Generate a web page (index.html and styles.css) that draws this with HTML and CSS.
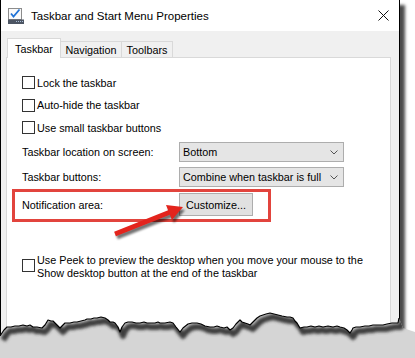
FILE: index.html
```html
<!DOCTYPE html>
<html lang="en">
<head>
  <meta charset="UTF-8">
  <title>Taskbar and Start Menu Properties</title>
  <link rel="stylesheet" href="styles.css">
</head>
<body>
  <div class="window">
    <div class="titlebar">
      <svg class="app-icon" width="16" height="17" viewBox="0 0 16 17">
        <rect x="0.5" y="1.5" width="13" height="11" fill="#fafafa" stroke="#8c8c8c"/>
        <polyline points="3,6.5 5.5,9.5 11.5,2.5" fill="none" stroke="#1f72d6" stroke-width="1.8"/>
        <rect x="0" y="12.5" width="16" height="4.5" fill="#4d5563"/>
        <rect x="8" y="14" width="1" height="1" fill="#a9bcd6"/>
        <rect x="10" y="14" width="1" height="1" fill="#a9bcd6"/>
        <rect x="12" y="14" width="1" height="1" fill="#a9bcd6"/>
        <rect x="14" y="14" width="1" height="1" fill="#a9bcd6"/>
      </svg>
      <span class="title">Taskbar and Start Menu Properties</span>
      <svg class="close" width="11" height="11" viewBox="0 0 11 11">
        <path d="M0.5 0.5 L10.5 10.5 M10.5 0.5 L0.5 10.5" stroke="#111" stroke-width="1"/>
      </svg>
    </div>

    <div class="tabs">
      <div class="tab active">Taskbar</div>
      <div class="tab nav">Navigation</div>
      <div class="tab tools">Toolbars</div>
    </div>

    <div class="panel">
      <div class="checks">
        <label class="check"><span class="box"></span>Lock the taskbar</label>
        <label class="check"><span class="box"></span>Auto-hide the taskbar</label>
        <label class="check"><span class="box"></span>Use small taskbar buttons</label>
      </div>

      <div class="fields">
        <div class="field">
          <span class="field-label">Taskbar location on screen:</span>
          <div class="select">Bottom
            <svg class="chevron" width="8" height="5" viewBox="0 0 8 5"><polyline points="0.5,0.5 4,4 7.5,0.5" fill="none" stroke="#555"/></svg>
          </div>
        </div>
        <div class="field">
          <span class="field-label">Taskbar buttons:</span>
          <div class="select">Combine when taskbar is full
            <svg class="chevron" width="8" height="5" viewBox="0 0 8 5"><polyline points="0.5,0.5 4,4 7.5,0.5" fill="none" stroke="#555"/></svg>
          </div>
        </div>
        <div class="field notify">
          <span class="field-label">Notification area:</span>
          <button class="btn">Customize...</button>
        </div>
      </div>

      <label class="check peek"><span class="box"></span><span>Use Peek to preview the desktop when you move your mouse to the<br>Show desktop button at the end of the taskbar</span></label>
    </div>
  </div>

  <div class="highlight"></div>

  <svg class="arrow" width="95" height="50" viewBox="105 195 95 50">
    <defs>
      <filter id="arrowBlur" x="-20%" y="-20%" width="140%" height="140%"><feGaussianBlur stdDeviation="1.2"/></filter>
    </defs>
    <polygon transform="translate(2,3)" filter="url(#arrowBlur)" fill="rgba(0,0,0,0.55)"
      points="114.1,231.7 168.1,210.2 166,205.1 183,207 171.9,219.9 169.9,214.8 115.9,236.3"/>
    <polygon fill="#e3241d"
      points="114.1,231.7 168.1,210.2 166,205.1 183,207 171.9,219.9 169.9,214.8 115.9,236.3"/>
  </svg>

  <svg class="torn" width="415" height="58" viewBox="0 300 415 58">
    <defs>
      <clipPath id="below">
        <polygon points="0,336 2,333 4,330 7,327 11,327 15,326 19,326 23,325 27,326 30,325 33,327 37,327 42,328 45,325 48,320 51,321 53,321 56,324 60,328 63,325 65,323 70,323 74,322 77,322 81,321 85,320 87,319 91,319 94,318 97,318 101,317 105,318 108,320 110,322 113,322 115,323 118,327 120,332 122,327 125,323 128,322 132,322 136,323 140,323 144,322 147,323 150,323 155,323 158,322 160,323 165,323 170,322 173,323 176,327 180,332 183,328 188,324 192,323 197,323 201,324 205,326 210,327 214,327 217,326 220,327 224,328 227,327 230,330 233,328 236,324 240,320 242,322 245,323 248,324 250,325 253,322 257,318 260,316 263,315 266,314 270,313 274,314 278,315 282,316 287,317 290,317 293,318 295,321 297,323 300,328 304,327 307,327 311,326 315,327 319,326 323,327 328,326 333,327 337,326 340,327 344,328 347,330 350,333 352,330 353,328 356,327 360,327 365,326 369,326 373,325 378,325 383,325 387,324 392,323 395,323 398,323 399,318 403,328 415,332 415,358 0,358"/>
      </clipPath>
      <filter id="edgeBlur" x="-5%" y="-50%" width="110%" height="200%"><feGaussianBlur stdDeviation="1.6"/></filter>
    </defs>
    <polygon fill="#d5d5d5" points="0,336 2,333 4,330 7,327 11,327 15,326 19,326 23,325 27,326 30,325 33,327 37,327 42,328 45,325 48,320 51,321 53,321 56,324 60,328 63,325 65,323 70,323 74,322 77,322 81,321 85,320 87,319 91,319 94,318 97,318 101,317 105,318 108,320 110,322 113,322 115,323 118,327 120,332 122,327 125,323 128,322 132,322 136,323 140,323 144,322 147,323 150,323 155,323 158,322 160,323 165,323 170,322 173,323 176,327 180,332 183,328 188,324 192,323 197,323 201,324 205,326 210,327 214,327 217,326 220,327 224,328 227,327 230,330 233,328 236,324 240,320 242,322 245,323 248,324 250,325 253,322 257,318 260,316 263,315 266,314 270,313 274,314 278,315 282,316 287,317 290,317 293,318 295,321 297,323 300,328 304,327 307,327 311,326 315,327 319,326 323,327 328,326 333,327 337,326 340,327 344,328 347,330 350,333 352,330 353,328 356,327 360,327 365,326 369,326 373,325 378,325 383,325 387,324 392,323 395,323 398,323 399,318 403,328 415,332 415,358 0,358"/>
    <g clip-path="url(#below)">
      <polyline transform="translate(3,4)" filter="url(#edgeBlur)" fill="none" stroke="#3c3c3c" stroke-width="6" stroke-linejoin="round"
        points="0,336 2,333 4,330 7,327 11,327 15,326 19,326 23,325 27,326 30,325 33,327 37,327 42,328 45,325 48,320 51,321 53,321 56,324 60,328 63,325 65,323 70,323 74,322 77,322 81,321 85,320 87,319 91,319 94,318 97,318 101,317 105,318 108,320 110,322 113,322 115,323 118,327 120,332 122,327 125,323 128,322 132,322 136,323 140,323 144,322 147,323 150,323 155,323 158,322 160,323 165,323 170,322 173,323 176,327 180,332 183,328 188,324 192,323 197,323 201,324 205,326 210,327 214,327 217,326 220,327 224,328 227,327 230,330 233,328 236,324 240,320 242,322 245,323 248,324 250,325 253,322 257,318 260,316 263,315 266,314 270,313 274,314 278,315 282,316 287,317 290,317 293,318 295,321 297,323 300,328 304,327 307,327 311,326 315,327 319,326 323,327 328,326 333,327 337,326 340,327 344,328 347,330 350,333 352,330 353,328 356,327 360,327 365,326 369,326 373,325 378,325 383,325 387,324 392,323 395,323 398,323 399,318 399,290"/>
    </g>
    <polyline fill="none" stroke="#000" stroke-width="1.2" stroke-linejoin="round"
      points="0,336 2,333 4,330 7,327 11,327 15,326 19,326 23,325 27,326 30,325 33,327 37,327 42,328 45,325 48,320 51,321 53,321 56,324 60,328 63,325 65,323 70,323 74,322 77,322 81,321 85,320 87,319 91,319 94,318 97,318 101,317 105,318 108,320 110,322 113,322 115,323 118,327 120,332 122,327 125,323 128,322 132,322 136,323 140,323 144,322 147,323 150,323 155,323 158,322 160,323 165,323 170,322 173,323 176,327 180,332 183,328 188,324 192,323 197,323 201,324 205,326 210,327 214,327 217,326 220,327 224,328 227,327 230,330 233,328 236,324 240,320 242,322 245,323 248,324 250,325 253,322 257,318 260,316 263,315 266,314 270,313 274,314 278,315 282,316 287,317 290,317 293,318 295,321 297,323 300,328 304,327 307,327 311,326 315,327 319,326 323,327 328,326 333,327 337,326 340,327 344,328 347,330 350,333 352,330 353,328 356,327 360,327 365,326 369,326 373,325 378,325 383,325 387,324 392,323 395,323 398,323 399,318"/>
  </svg>
</body>
</html>
```

FILE: styles.css
```css
* {
  margin: 0;
  padding: 0;
  box-sizing: border-box;
}

body {
  position: relative;
  width: 415px;
  height: 358px;
  overflow: hidden;
  background-color: #fff;
  font-family: 'Liberation Sans', Arial, sans-serif;
  font-size: 10.8px;
  color: #000;
}

.window {
  display: flex;
  flex-direction: column;
  width: 400px;
  height: 359px;
  margin-top: -1px;
  border: 1px solid #000;
  background-color: #f0f0f0;
  box-shadow: 5px 6px 3px rgba(0,0,0,0.7);
}

.titlebar {
  display: flex;
  align-items: center;
  flex: none;
  height: 31px;
  padding-left: 7px;
  background-color: #fff;
}

.app-icon {
  display: block;
  margin-top: -1px;
}

.title {
  margin-left: 7px;
  font-size: 11.5px;
}

.close {
  display: block;
  margin-left: auto;
  margin-right: 10px;
}

.tabs {
  position: relative;
  z-index: 1;
  display: flex;
  align-items: flex-end;
  flex: none;
  height: 20px;
  margin: 7px 0 -1px 6px;
}

.tab {
  display: flex;
  align-items: center;
  justify-content: center;
  height: 17px;
  border: 1px solid #d9d9d9;
  border-left: none;
  background-color: #f0f0f0;
}

.tab.active {
  height: 20px;
  width: 54px;
  border-left: 1px solid #d9d9d9;
  border-bottom: none;
  background-color: #fff;
}

.tab.nav {
  width: 61px;
}

.tab.tools {
  width: 51px;
}

.panel {
  flex: 1;
  margin: 0 8px 0 5px;
  padding: 18px 15px 0;
  border: 1px solid #d9d9d9;
  border-bottom: none;
  background-color: #fff;
}

.checks {
  display: flex;
  flex-direction: column;
  gap: 9.5px;
}

.check {
  display: flex;
  align-items: center;
  gap: 2px;
  height: 13px;
  white-space: nowrap;
}

.box {
  flex: none;
  width: 13px;
  height: 13px;
  border: 1px solid #333;
  background-color: #fff;
}

.fields {
  display: flex;
  flex-direction: column;
  gap: 5px;
  margin-top: 8px;
}

.field {
  display: flex;
  align-items: center;
  height: 20px;
}

.field.notify {
  height: 23px;
  margin-top: 1px;
}

.field-label {
  width: 157px;
}

.select {
  display: flex;
  align-items: center;
  justify-content: space-between;
  width: 165px;
  height: 20px;
  padding: 0 5px 0 3px;
  border: 1px solid #adadad;
  background-color: #e5e5e5;
}

.chevron {
  display: block;
}

.btn {
  width: 74px;
  height: 23px;
  border: 1px solid #adadad;
  background-color: #e1e1e1;
  font: inherit;
  color: #000;
}

.check.peek {
  height: auto;
  align-items: flex-start;
  margin-top: 38px;
  line-height: 13px;
}

.check.peek .box {
  margin-top: 5px;
}

.highlight {
  position: absolute;
  left: 12px;
  top: 189px;
  width: 259px;
  height: 33px;
  border: 3px solid #e2443d;
}

.arrow {
  position: absolute;
  left: 105px;
  top: 195px;
}

.torn {
  position: absolute;
  left: 0;
  top: 300px;
}
```
